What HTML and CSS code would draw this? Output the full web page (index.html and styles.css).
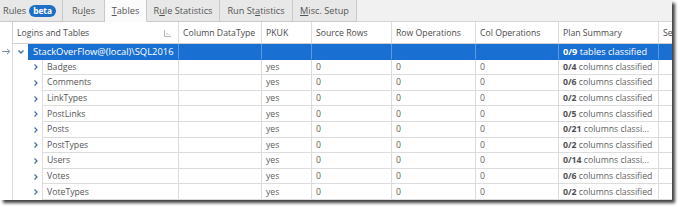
FILE: index.html
```html
<!DOCTYPE html>
<html>
<head>
<meta charset="utf-8">
<link rel="stylesheet" href="styles.css">
</head>
<body>
<div class="window">
  <div class="tabbar">
    <div class="tab tab-first">Rules <span class="badge">beta</span></div>
    <div class="tab tab-rules">Ru<u>l</u>es</div>
    <div class="tab tab-tables active"><u>T</u>ables</div>
    <div class="tab tab-rulestats">R<u>u</u>le Statistics</div>
    <div class="tab tab-runstats">Run St<u>a</u>tistics</div>
    <div class="tab tab-misc"><u>M</u>isc. Setup</div>
  </div>
  <div class="grid">
    <div class="row head">
      <div class="c ind"></div>
      <div class="c name-h">Logins and Tables
        <svg class="sizer" width="7" height="7" viewBox="0 0 7 7"><path d="M0.5 0v6.5H7" fill="none" stroke="#b5b5b5" stroke-width="1"/><path d="M2.5 3v2h1V3zM4.5 4v1h1V4z" fill="#c5c5c5"/></svg>
      </div>
      <div class="c">Column DataType</div>
      <div class="c">PKUK</div>
      <div class="c">Source Rows</div>
      <div class="c">Row Operations</div>
      <div class="c">Col Operations</div>
      <div class="c">Plan Summary</div>
      <div class="c last">Ser</div>
    </div>
    <div class="row sel">
      <div class="c ind"><svg width="9" height="7" viewBox="0 0 9 7"><path d="M0 3.5h8M5 0.8l2.8 2.7L5 6.2" fill="none" stroke="#7a8fa8" stroke-width="1"/></svg></div>
      <div class="c exp"><svg width="6" height="4" viewBox="0 0 6 4"><path d="M0.5 0.5l2.5 2.5 2.5-2.5" fill="none" stroke="#3f6fa8" stroke-width="1.3"/></svg></div>
      <div class="c name-sel">StackOverFlow@(local)\SQL2016</div>
      <div class="c b"></div>
      <div class="c b"></div>
      <div class="c b"></div>
      <div class="c b"></div>
      <div class="c b"></div>
      <div class="c b sum-sel"><b>0/9</b>&nbsp;tables classified</div>
      <div class="c b last"></div>
    </div>
    <div class="row"><div class="c ind"></div><div class="c sp"></div><div class="c exp2"><svg width="4" height="6" viewBox="0 0 4 6"><path d="M0.5 0.5l2.5 2.5-2.5 2.5" fill="none" stroke="#3f6fa8" stroke-width="1.2"/></svg></div><div class="c name">Badges</div><div class="c"></div><div class="c">yes</div><div class="c">0</div><div class="c">0</div><div class="c">0</div><div class="c"><b>0/4</b>&nbsp;columns classified</div><div class="c last"></div></div>
    <div class="row"><div class="c ind"></div><div class="c sp"></div><div class="c exp2"><svg width="4" height="6" viewBox="0 0 4 6"><path d="M0.5 0.5l2.5 2.5-2.5 2.5" fill="none" stroke="#3f6fa8" stroke-width="1.2"/></svg></div><div class="c name">Comments</div><div class="c"></div><div class="c">yes</div><div class="c">0</div><div class="c">0</div><div class="c">0</div><div class="c"><b>0/6</b>&nbsp;columns classified</div><div class="c last"></div></div>
    <div class="row"><div class="c ind"></div><div class="c sp"></div><div class="c exp2"><svg width="4" height="6" viewBox="0 0 4 6"><path d="M0.5 0.5l2.5 2.5-2.5 2.5" fill="none" stroke="#3f6fa8" stroke-width="1.2"/></svg></div><div class="c name">LinkTypes</div><div class="c"></div><div class="c">yes</div><div class="c">0</div><div class="c">0</div><div class="c">0</div><div class="c"><b>0/2</b>&nbsp;columns classified</div><div class="c last"></div></div>
    <div class="row"><div class="c ind"></div><div class="c sp"></div><div class="c exp2"><svg width="4" height="6" viewBox="0 0 4 6"><path d="M0.5 0.5l2.5 2.5-2.5 2.5" fill="none" stroke="#3f6fa8" stroke-width="1.2"/></svg></div><div class="c name">PostLinks</div><div class="c"></div><div class="c">yes</div><div class="c">0</div><div class="c">0</div><div class="c">0</div><div class="c"><b>0/5</b>&nbsp;columns classified</div><div class="c last"></div></div>
    <div class="row"><div class="c ind"></div><div class="c sp"></div><div class="c exp2"><svg width="4" height="6" viewBox="0 0 4 6"><path d="M0.5 0.5l2.5 2.5-2.5 2.5" fill="none" stroke="#3f6fa8" stroke-width="1.2"/></svg></div><div class="c name">Posts</div><div class="c"></div><div class="c">yes</div><div class="c">0</div><div class="c">0</div><div class="c">0</div><div class="c"><b>0/21</b>&nbsp;columns classi...</div><div class="c last"></div></div>
    <div class="row"><div class="c ind"></div><div class="c sp"></div><div class="c exp2"><svg width="4" height="6" viewBox="0 0 4 6"><path d="M0.5 0.5l2.5 2.5-2.5 2.5" fill="none" stroke="#3f6fa8" stroke-width="1.2"/></svg></div><div class="c name">PostTypes</div><div class="c"></div><div class="c">yes</div><div class="c">0</div><div class="c">0</div><div class="c">0</div><div class="c"><b>0/2</b>&nbsp;columns classified</div><div class="c last"></div></div>
    <div class="row"><div class="c ind"></div><div class="c sp"></div><div class="c exp2"><svg width="4" height="6" viewBox="0 0 4 6"><path d="M0.5 0.5l2.5 2.5-2.5 2.5" fill="none" stroke="#3f6fa8" stroke-width="1.2"/></svg></div><div class="c name">Users</div><div class="c"></div><div class="c">yes</div><div class="c">0</div><div class="c">0</div><div class="c">0</div><div class="c"><b>0/14</b>&nbsp;columns classi...</div><div class="c last"></div></div>
    <div class="row"><div class="c ind"></div><div class="c sp"></div><div class="c exp2"><svg width="4" height="6" viewBox="0 0 4 6"><path d="M0.5 0.5l2.5 2.5-2.5 2.5" fill="none" stroke="#3f6fa8" stroke-width="1.2"/></svg></div><div class="c name">Votes</div><div class="c"></div><div class="c">yes</div><div class="c">0</div><div class="c">0</div><div class="c">0</div><div class="c"><b>0/6</b>&nbsp;columns classified</div><div class="c last"></div></div>
    <div class="row"><div class="c ind"></div><div class="c sp"></div><div class="c exp2"><svg width="4" height="6" viewBox="0 0 4 6"><path d="M0.5 0.5l2.5 2.5-2.5 2.5" fill="none" stroke="#3f6fa8" stroke-width="1.2"/></svg></div><div class="c name">VoteTypes</div><div class="c"></div><div class="c">yes</div><div class="c">0</div><div class="c">0</div><div class="c">0</div><div class="c"><b>0/2</b>&nbsp;columns classified</div><div class="c last"></div></div>
  </div>
</div>
</body>
</html>
```
FILE: styles.css
```css
html, body {
  margin: 0;
  padding: 0;
  background: #ffffff;
}
body {
  width: 680px;
  height: 207px;
  overflow: hidden;
  font-family: "Open Sans", "Noto Sans", sans-serif;
  font-size: 8.7px;
  color: #626262;
}
.window {
  width: 672px;
  height: 200px;
  background: #fff;
  box-shadow: 3px 3px 3px rgba(0, 0, 0, 0.75);
  overflow: hidden;
}
.tabbar {
  height: 22px;
  display: flex;
  background: #f1f1f1;
  border-bottom: 1px solid #d6d6d6;
  box-sizing: border-box;
}
.tab {
  box-sizing: border-box;
  height: 22px;
  display: flex;
  align-items: center;
  justify-content: center;
  background: #e8e8e8;
  border-right: 1px solid #c9c9c9;
  border-bottom: 1px solid #c9c9c9;
  color: #555;
  font-size: 9.2px;
}
.tab u { text-decoration: underline; text-underline-offset: 1px; }
.tab.active {
  background: #fbfbfb;
  border-bottom-color: #fbfbfb;
}
.tab-first { width: 63px; justify-content: flex-start; padding-left: 3px; gap: 3px; }
.tab-rules { width: 42px; }
.tab-tables { width: 42px; }
.tab-rulestats { width: 73px; }
.tab-runstats { width: 73px; }
.tab-misc { width: 64px; }
.badge {
  display: inline-block;
  background: #1f6fc5;
  color: #fff;
  border-radius: 6px;
  font-size: 8.3px;
  line-height: 12px;
  padding: 0 4px;
  font-weight: 700;
}
.grid {
  display: flex;
  flex-direction: column;
}
.row {
  display: grid;
  grid-template-columns: 13px 15px 15px 136px 83px 50px 80px 84px 83px 100px 13px;
  height: 15.6px;
  box-sizing: border-box;
}
.row.head {
  height: 22px;
  grid-template-columns: 13px 166px 83px 50px 80px 84px 83px 100px 13px;
  color: #4a4a4a;
}
.c {
  box-sizing: border-box;
  border-right: 1px solid #dcdcdc;
  border-bottom: 1px solid #dcdcdc;
  padding-left: 4px;
  display: flex;
  align-items: center;
  white-space: nowrap;
  overflow: hidden;
}
.c.last { border-right: none; }
.head .c { padding-left: 4px; border-bottom-color: #d0d0d0; }
.head .c.ind { border-right-color: #d0d0d0; }
.name-h { position: relative; }
.sizer { position: absolute; right: 7px; top: 8px; }
.c.ind {
  padding: 0;
  justify-content: center;
  border-bottom: none;
}
.row .c.sp { border: none; }
.c.exp {
  border: none;
  padding-left: 5px;
}
.c.exp2 {
  border-bottom: none;
  padding-left: 6px;
}
.c.name { padding-left: 4px; color: #555; }
.sel .c.b, .sel .name-sel {
  background: #1a6fd2;
  color: #fff;
  border-right-color: #5a98e0;
  border-bottom-color: #1a6fd2;
}
.sel .name-sel {
  grid-column: span 2;
  padding-left: 5px;
  font-size: 9.4px;
}
.sel .sum-sel { font-size: 9.2px; }
b { font-weight: 700; color: #505050; }
.sel b { color: #fff; }
```
